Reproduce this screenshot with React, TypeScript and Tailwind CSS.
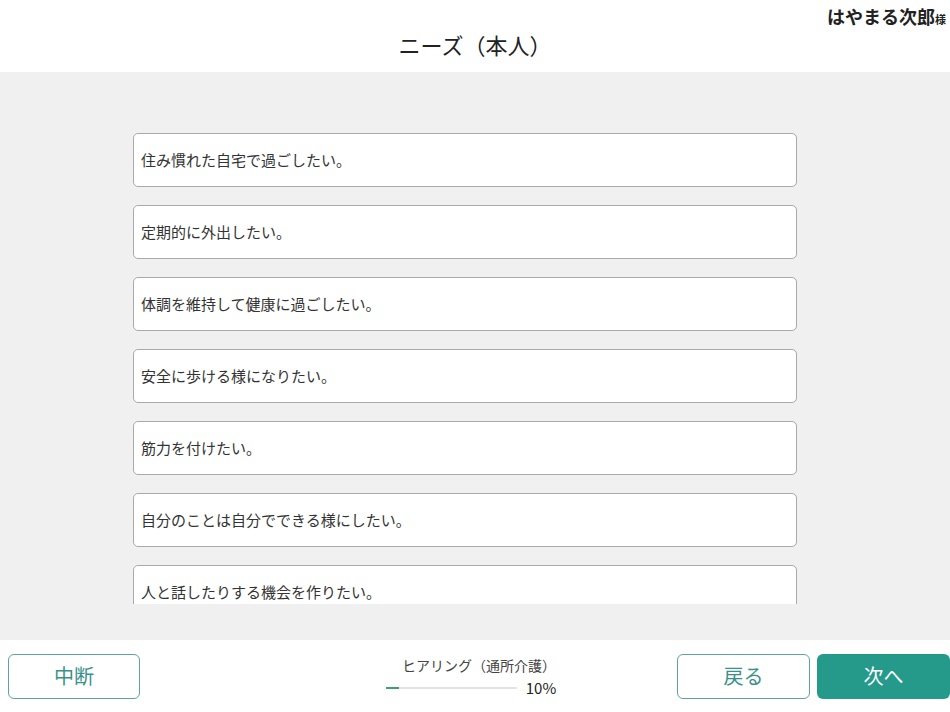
import React from "react";

const needs = [
  "住み慣れた自宅で過ごしたい。",
  "定期的に外出したい。",
  "体調を維持して健康に過ごしたい。",
  "安全に歩ける様になりたい。",
  "筋力を付けたい。",
  "自分のことは自分でできる様にしたい。",
  "人と話したりする機会を作りたい。",
  "趣味の活動を続けたい。",
];

const App: React.FC = () => {
  return (
    <div
      className="w-[950px] h-[712px] flex flex-col bg-white text-[#333]"
      style={{ fontFamily: '"Noto Sans CJK JP", "Noto Sans", sans-serif' }}
    >
      <header className="h-[72px] flex flex-col shrink-0">
        <div className="flex justify-end pr-[4px] pt-[3px] h-[27px]">
          <span className="text-[18px] font-bold leading-[27px] text-[#222]">
            はやまる次郎<span className="text-[11px]">様</span>
          </span>
        </div>
        <h1 className="text-center text-[22px] leading-[34px] text-[#222]">
          ニーズ（本人）
        </h1>
      </header>

      <main className="flex-1 bg-[#f0f0f0] flex flex-col pb-[36px] min-h-0">
        <div className="flex-1 overflow-hidden pt-[61px]">
          <ul className="flex flex-col gap-[18px] w-[664px] ml-[133px]">
            {needs.map((n, i) => (
              <li
                key={i}
                className="h-[54px] bg-white border border-[#a9a9a9] rounded-[5px] flex items-center px-[7px] text-[15px] text-[#333]"
              >
                {n}
              </li>
            ))}
          </ul>
        </div>
      </main>

      <footer className="h-[72px] shrink-0 grid grid-cols-[1fr_auto_1fr] items-center pl-[8px]">
        <div>
          <button className="w-[132px] h-[45px] border border-[#5fa39e] rounded-[6px] text-[20px] text-[#3a918a] bg-white">
            中断
          </button>
        </div>
        <div className="flex flex-col items-center">
          <span className="text-[14px] text-[#444] leading-[20px]">ヒアリング（通所介護）</span>
          <div className="flex items-center gap-[9px] mt-[3px] mr-[16px]">
            <div className="w-[131px] h-[2px] bg-[#e3e3e3]">
              <div className="h-full bg-[#3f9e76]" style={{ width: "10%" }} />
            </div>
            <span className="text-[15px] text-[#222] leading-[20px]">10%</span>
          </div>
        </div>
        <div className="flex justify-end gap-[7px]">
          <button className="w-[133px] h-[45px] border border-[#5fa39e] rounded-[6px] text-[20px] text-[#3a918a] bg-white">
            戻る
          </button>
          <button className="w-[133px] h-[45px] rounded-[6px] text-[20px] text-white bg-[#259a8b]">
            次へ
          </button>
        </div>
      </footer>
    </div>
  );
};

export default App;
